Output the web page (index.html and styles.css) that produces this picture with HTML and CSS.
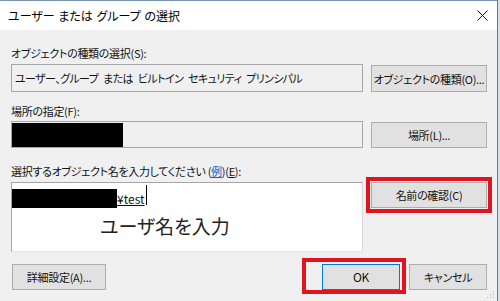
FILE: index.html
```html
<!DOCTYPE html>
<html lang="ja">
<head>
<meta charset="utf-8">
<link rel="stylesheet" href="styles.css">
</head>
<body>
<div class="window">
  <div class="titlebar">
    <span class="title">ユーザー または グループ の選択</span>
    <svg class="close" width="11" height="11" viewBox="0 0 11 11"><path d="M0.5 0.5L10.5 10.5M10.5 0.5L0.5 10.5" stroke="#111" stroke-width="1" fill="none"/></svg>
  </div>
  <div class="content">
    <div class="label l1">オブジェクトの種類の選択(S):</div>
    <div class="row r1">
      <div class="field f1">ユーザー、グループ または ビルトイン セキュリティ プリンシパル</div>
      <button class="btn b1">オブジェクトの種類(O)...</button>
    </div>
    <div class="label l2">場所の指定(F):</div>
    <div class="row r2">
      <div class="field f2"><span class="redact r-loc"></span></div>
      <button class="btn b2">場所(L)...</button>
    </div>
    <div class="label l3">選択するオブジェクト名を入力してください (<span class="link">例</span>)(<u>E</u>):</div>
    <div class="row r3">
      <div class="textarea">
        <div class="line1"><span class="redact r-name"></span><span class="typed">¥test</span><span class="caret"></span></div>
        <div class="hint">ユーザ名を入力</div>
      </div>
      <button class="btn b3 marked">名前の確認(C)</button>
    </div>
    <div class="bottom">
      <button class="btn detail">詳細設定(A)...</button>
      <div class="actions">
        <div class="okwrap"><button class="btn ok">OK</button></div>
        <button class="btn cancel">キャンセル</button>
      </div>
    </div>
  </div>
  <svg class="grip" width="8" height="8" viewBox="0 0 8 8">
    <rect x="6" y="0" width="1" height="1" fill="#b8b8b8"/>
    <rect x="3" y="3" width="1" height="1" fill="#b8b8b8"/>
    <rect x="6" y="3" width="1" height="1" fill="#b8b8b8"/>
    <rect x="0" y="6" width="1" height="1" fill="#b8b8b8"/>
    <rect x="3" y="6" width="1" height="1" fill="#b8b8b8"/>
    <rect x="6" y="6" width="1" height="1" fill="#b8b8b8"/>
  </svg>
</div>
</body>
</html>
```
FILE: styles.css
```css
html, body {
  margin: 0;
  padding: 0;
}
body {
  width: 500px;
  height: 301px;
  overflow: hidden;
  background: #d9e2ea;
  font-family: "Noto Sans CJK JP", "Noto Sans", sans-serif;
  font-size: 12px;
  font-feature-settings: "palt";
  color: #000;
}
.window {
  position: relative;
  width: 497px;
  height: 301px;
  border-right: 1px solid #5b7c96;
  background: #f0f0f0;
  display: flex;
  flex-direction: column;
}
.titlebar {
  height: 29px;
  border-top: 1px solid #7894aa;
  background: #fff;
  display: flex;
  align-items: center;
  justify-content: space-between;
  padding: 0 9px 0 8px;
}
.title {
  line-height: 16px;
  word-spacing: 1px;
}
.content {
  padding: 0 10px 0 11px;
  display: flex;
  flex-direction: column;
  font-size: 11px;
  letter-spacing: -0.3px;
  color: #111;
}
.label {
  height: 16px;
  line-height: 16px;
}
.l1 { margin-top: 15px; }
.l2 { margin-top: 11px; }
.l3 { margin-top: 15px; }
.link {
  color: #0066cc;
  text-decoration: underline;
}
.row {
  display: flex;
  justify-content: space-between;
}
.r1 { margin-top: 3px; align-items: flex-end; }
.r2 { margin-top: 2px; align-items: flex-end; }
.r3 { margin-top: 3px; align-items: flex-start; }
.field {
  box-sizing: border-box;
  width: 352px;
  border: 1px solid #a6a6a6;
  background: #f0f0f0;
  display: flex;
  align-items: center;
  white-space: pre;
}
.f1 {
  height: 28px;
  padding-left: 3px;
  letter-spacing: -0.6px;
  word-spacing: 3px;
}
.f2 {
  height: 27px;
}
.redact {
  display: inline-block;
  background: #000;
}
.r-loc {
  width: 111px;
  height: 24px;
}
.btn {
  box-sizing: border-box;
  margin: 0;
  padding: 0;
  height: 26px;
  width: 116px;
  background: #e1e1e1;
  border: 1px solid #adadad;
  font: inherit;
  letter-spacing: -0.3px;
  font-feature-settings: "palt";
  color: #111;
  line-height: 16px;
  white-space: nowrap;
}
.b1 { height: 27px; }
.textarea {
  box-sizing: border-box;
  width: 352px;
  height: 70px;
  background: #fff;
  border: 1px solid #a6a6a6;
  border-right-color: #d6d6d6;
  border-bottom-color: #e6e6e6;
}
.line1 {
  display: flex;
  align-items: center;
  margin-top: 6px;
  height: 19px;
}
.r-name {
  width: 105px;
  height: 19px;
}
.typed {
  font-size: 12px;
  letter-spacing: 0;
  text-decoration: underline;
  line-height: 19px;
}
.caret {
  align-self: flex-start;
  margin-top: -4px;
  margin-left: 1px;
  width: 1px;
  height: 20px;
  background: #000;
}
.hint {
  margin-top: 6px;
  padding-left: 88px;
  font-size: 19px;
  letter-spacing: 0;
  line-height: 24px;
  color: #222;
}
.marked {
  outline: 4px solid #e0141f;
  outline-offset: 1px;
}
.bottom {
  margin-top: 12px;
  display: flex;
  justify-content: space-between;
  align-items: center;
}
.detail {
  width: 94px;
  margin-left: 1px;
}
.actions {
  display: flex;
  gap: 9px;
}
.okwrap {
  position: relative;
}
.okwrap::after {
  content: "";
  position: absolute;
  top: -6px;
  left: -20px;
  right: -6px;
  bottom: -4px;
  border: 4px solid #e0141f;
  pointer-events: none;
}
.ok {
  width: 78px;
  border-color: #0078d7;
  font-size: 12px;
}
.cancel {
  width: 78px;
}
.grip {
  position: absolute;
  right: 2px;
  bottom: 2px;
}
```
